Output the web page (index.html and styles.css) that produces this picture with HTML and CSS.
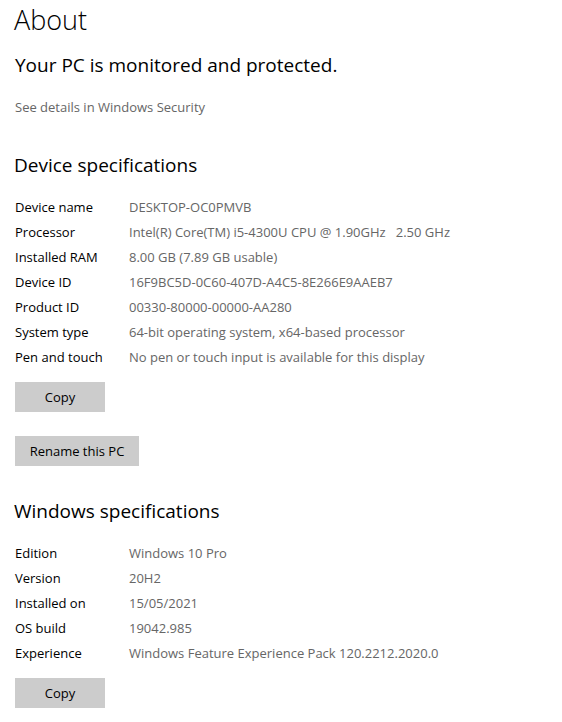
FILE: index.html
```html
<!DOCTYPE html>
<html>
<head>
<meta charset="utf-8">
<link rel="stylesheet" href="styles.css">
</head>
<body>
<main class="page">
  <h1 class="title">About</h1>
  <p class="status">Your PC is monitored and protected.</p>
  <a class="link">See details in Windows Security</a>

  <h2 class="section">Device specifications</h2>
  <dl class="specs">
    <div class="row"><dt>Device name</dt><dd>DESKTOP-OC0PMVB</dd></div>
    <div class="row"><dt>Processor</dt><dd>Intel(R) Core(TM) i5-4300U CPU @ 1.90GHz&nbsp;&nbsp; 2.50 GHz</dd></div>
    <div class="row"><dt>Installed RAM</dt><dd>8.00 GB (7.89 GB usable)</dd></div>
    <div class="row"><dt>Device ID</dt><dd>16F9BC5D-0C60-407D-A4C5-8E266E9AAEB7</dd></div>
    <div class="row"><dt>Product ID</dt><dd>00330-80000-00000-AA280</dd></div>
    <div class="row"><dt>System type</dt><dd>64-bit operating system, x64-based processor</dd></div>
    <div class="row"><dt>Pen and touch</dt><dd>No pen or touch input is available for this display</dd></div>
  </dl>
  <button class="btn btn-copy">Copy</button>
  <button class="btn btn-rename">Rename this PC</button>

  <h2 class="section section-win">Windows specifications</h2>
  <dl class="specs">
    <div class="row"><dt>Edition</dt><dd>Windows 10 Pro</dd></div>
    <div class="row"><dt>Version</dt><dd>20H2</dd></div>
    <div class="row"><dt>Installed on</dt><dd>15/05/2021</dd></div>
    <div class="row"><dt>OS build</dt><dd>19042.985</dd></div>
    <div class="row"><dt>Experience</dt><dd>Windows Feature Experience Pack 120.2212.2020.0</dd></div>
  </dl>
  <button class="btn btn-copy">Copy</button>
</main>
</body>
</html>
```

FILE: styles.css
```css
* { box-sizing: border-box; }
html, body { margin: 0; padding: 0; background: #fff; }
body {
  font-family: "Open Sans", "Noto Sans", "Liberation Sans", sans-serif;
  color: #000;
  font-size: 13px;
  overflow: hidden;
}
.page {
  display: flex;
  flex-direction: column;
  align-items: flex-start;
  padding: 0 15px;
}
.title {
  margin: 0;
  font-size: 27px;
  font-weight: 300;
  line-height: 40px;
  margin-left: -1px;
}
.status {
  margin: 11px 0 0 0;
  font-size: 19px;
  font-weight: 400;
  line-height: 28px;
}
.link {
  margin-top: 18px;
  color: #666;
  font-size: 13px;
  line-height: 20px;
}
.section {
  margin: 34px 0 0 -1px;
  font-size: 19px;
  font-weight: 400;
  line-height: 28px;
}
.section-win { margin-top: 31px; }
.specs {
  margin: 15px 0 0 0;
  display: flex;
  flex-direction: column;
}
.row {
  display: grid;
  grid-template-columns: 114px auto;
  height: 25px;
  align-items: center;
}
dt { margin: 0; color: #000; }
dd { margin: 0; color: #666; }
.btn {
  font-family: inherit;
  font-size: 13px;
  color: #000;
  background: #ccc;
  border: none;
  height: 30px;
  padding: 0;
  margin-top: 13px;
}
.btn-copy { width: 90px; }
.btn-rename { width: 124px; margin-top: 24px; }
```
